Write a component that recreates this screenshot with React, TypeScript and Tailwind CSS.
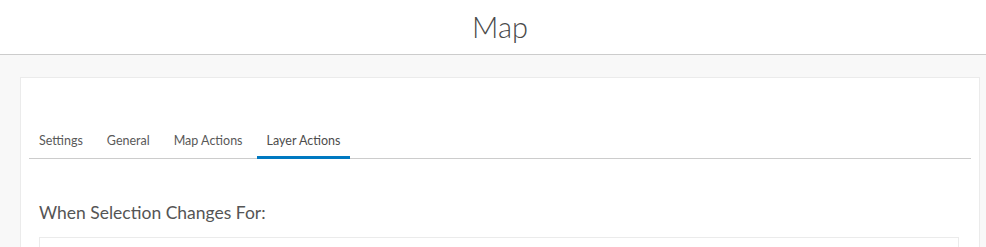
import React, { useState } from "react";

const tabs = ["Settings", "General", "Map Actions", "Layer Actions"];

export default function App() {
  const [active, setActive] = useState("Layer Actions");

  return (
    <div className="min-h-screen bg-[#f8f8f8] font-['Lato',sans-serif] text-[#4c4c4c]">
      <header className="h-[55px] pl-[14px] bg-white border-b border-[#cccccc] flex items-center justify-center">
        <h1 className="text-[29px] font-light leading-none pb-[2px] text-[#4a4a4a]">Map</h1>
      </header>

      <div className="pl-5 pr-[6px] pt-[22px]">
        <div className="bg-white border border-[#ebebeb] border-b-0 pt-[45px]">
          <div className="mx-2 flex gap-1 border-b border-[#cccccc]">
            {tabs.map((tab) => (
              <button
                key={tab}
                type="button"
                onClick={() => setActive(tab)}
                className={
                  tab === active
                    ? "h-[36px] px-[10px] -mb-px border-b-[3px] border-[#0079c1] text-[12.5px] text-[#4c4c4c] pt-[3px] cursor-pointer"
                    : "h-[36px] px-[10px] -mb-px border-b-[3px] border-transparent text-[12.5px] text-[#595959] pt-[3px] cursor-pointer"
                }
              >
                {tab}
              </button>
            ))}
          </div>

          <div className="pl-[18px] pr-5 pt-[42px]">
            <h2 className="text-[17.5px] leading-6 text-[#555555]">When Selection Changes For:</h2>
            <div className="mt-3 h-[40px] border border-[#ebebeb]"></div>
          </div>
        </div>
      </div>
    </div>
  );
}
